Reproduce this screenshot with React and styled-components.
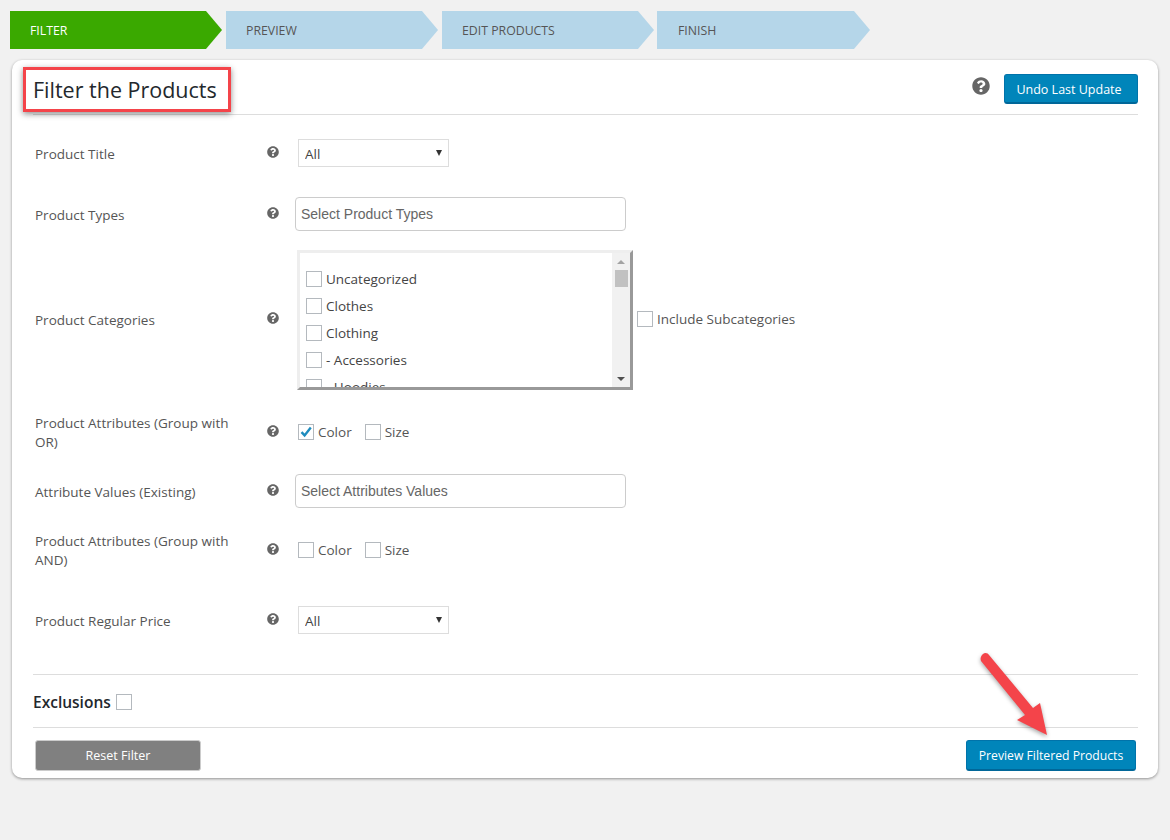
import styled, { createGlobalStyle } from "styled-components"
import { FaQuestionCircle } from "react-icons/fa"

const GlobalStyle = createGlobalStyle`
    html, body {
        margin: 0;
        padding: 0;
        background: #f1f1f1;
        font-family: "Open Sans", sans-serif;
        font-size: 13.5px;
        color: #444;
    }
`

const Page = styled.div`
    width: 1170px;
    height: 840px;
    padding-top: 11px;
    box-sizing: border-box;
`

const Steps = styled.div`
    display: flex;
    gap: 4px;
    margin-left: 10px;
    margin-bottom: 11px;
`

const Step = styled.div`
    width: 212px;
    height: 38px;
    box-sizing: border-box;
    padding-left: 20px;
    display: flex;
    align-items: center;
    font-size: 12.3px;
    text-transform: uppercase;
    background: ${(p) => (p.$active ? "#3aa900" : "#b5d6e9")};
    color: ${(p) => (p.$active ? "#fff" : "#555")};
    clip-path: polygon(0 0, calc(100% - 16px) 0, 100% 50%, calc(100% - 16px) 100%, 0 100%);

    &:last-child {
        width: 213px;
        margin-left: -1px;
        padding-left: 21px;
    }
`

const Card = styled.div`
    position: relative;
    width: 1146px;
    height: 718px;
    margin-left: 12px;
    padding: 0 20px 0 21px;
    box-sizing: border-box;
    background: #fff;
    border-radius: 10px;
    box-shadow: 0 1px 3px rgba(0, 0, 0, 0.4);
`

const Header = styled.div`
    height: 55px;
    box-sizing: border-box;
    border-bottom: 1px solid #ddd;
    display: flex;
    justify-content: space-between;
`

const Title = styled.h1`
    margin: 7px 0 0 -10px;
    width: 208px;
    height: 45px;
    box-sizing: border-box;
    border: 3px solid #f4444a;
    box-shadow: 0 2px 6px rgba(0, 0, 0, 0.45);
    padding: 0 0 0 7px;
    display: flex;
    align-items: center;
    font-size: 21.5px;
    font-weight: 400;
    color: #23282d;
    white-space: nowrap;
`

const HeaderActions = styled.div`
    display: flex;
    gap: 14px;
    padding-top: 14px;
`

const BigHelp = styled(FaQuestionCircle)`
    width: 18px;
    height: 18px;
    margin-top: 3px;
    color: #666;
`

const Button = styled.button`
    height: ${(p) => p.$height || 31}px;
    width: ${(p) => p.$width}px;
    padding: 1px ${(p) => p.$shift || 0}px 0 0;
    border: 1px solid #0073aa;
    border-bottom: 2px solid #006799;
    border-radius: 3px;
    background: #0085ba;
    color: #fff;
    font-family: "Open Sans", sans-serif;
    font-size: ${(p) => p.$font || 12.5}px;
`

const GreyButton = styled(Button)`
    padding: 0;
    background: #808080;
    border: 1px solid #ccc;
`

const Form = styled.div`
    padding-left: 2px;
`

const Row = styled.div`
    display: grid;
    grid-template-columns: 232px 31px 1fr;
    align-items: center;
    margin-top: ${(p) => p.$top}px;
    min-height: ${(p) => p.$height}px;
`

const Label = styled.div`
    width: 205px;
    line-height: 19px;
    color: #555;
    padding-top: 2px;
    margin-bottom: ${(p) => p.$lift || 0}px;
`

const Help = styled(FaQuestionCircle)`
    width: 12px;
    height: 12px;
    color: #666;
    margin-bottom: ${(p) => 3 + (p.$lift || 0)}px;
`

const SelectWrap = styled.div`
    position: relative;
    width: 151px;
    height: 28px;

    &::after {
        content: "";
        position: absolute;
        right: 7px;
        top: 11px;
        border-left: 3px solid transparent;
        border-right: 3px solid transparent;
        border-top: 6px solid #333;
    }
`

const Select = styled.select`
    appearance: none;
    width: 100%;
    height: 100%;
    box-sizing: border-box;
    padding: 2px 6px 0;
    border: 1px solid #ddd;
    border-radius: 0;
    background: #fff;
    color: #444;
    font-family: "Open Sans", sans-serif;
    font-size: 13.5px;
`

const TextInput = styled.input`
    width: 331px;
    height: 34px;
    box-sizing: border-box;
    margin-left: -3px;
    padding: 0 5px;
    border: 1px solid #ccc;
    border-radius: 4px;
    font-family: "Liberation Sans", sans-serif;
    font-size: 14px;

    &::placeholder {
        color: #666;
        opacity: 1;
    }
`

const Inline = styled.div`
    display: flex;
    align-items: center;
    gap: ${(p) => p.$gap || 0}px;
`

const Option = styled.div`
    display: flex;
    align-items: center;
    gap: 4px;
    margin-right: 13px;
    color: #555;
`

const SideOption = styled(Option)`
    margin-bottom: 2px;
`

const Box = styled.span`
    flex: none;
    width: 16px;
    height: 16px;
    box-sizing: border-box;
    display: flex;
    align-items: center;
    justify-content: center;
    border: 1px solid #b4b9be;
    background: #fff;
`

const ListboxRow = styled(Inline)`
    margin-left: -1px;
`

const Listbox = styled.div`
    width: 336px;
    height: 140px;
    box-sizing: border-box;
    display: flex;
    border-style: solid;
    border-width: 3px;
    border-color: #eee #999 #999 #eee;
`

const ListItems = styled.div`
    flex: 1;
    overflow: hidden;
    padding: 13px 0 0 6px;
`

const ListItem = styled.div`
    height: 26.8px;
    display: flex;
    align-items: center;
    gap: 4px;
    color: #444;
`

const Scrollbar = styled.div`
    position: relative;
    width: 18px;
    background: #f1f1f1;
    flex: none;
`

const ScrollThumb = styled.div`
    position: absolute;
    top: 17px;
    left: 3px;
    width: 13px;
    height: 17px;
    background: #c1c1c1;
`

const ScrollArrow = styled.div`
    position: absolute;
    left: 5px;
    border-left: 4px solid transparent;
    border-right: 4px solid transparent;
    ${(p) =>
        p.$down
            ? "bottom: 6px; border-top: 4px solid #505050;"
            : "top: 7px; border-bottom: 4px solid #a3a3a3;"}
`

const Divider = styled.div`
    height: 1px;
    background: #ddd;
    margin-top: ${(p) => p.$top || 0}px;
`

const Exclusions = styled.div`
    height: 52px;
    display: flex;
    align-items: center;
    gap: 5px;
    padding-top: 1px;
    box-sizing: border-box;
    font-size: 15.5px;
    font-weight: 600;
    color: #23282d;
`

const Footer = styled.div`
    display: flex;
    justify-content: space-between;
    margin-top: 12px;
    padding: 0 2px;
`

const Arrow = styled.svg`
    position: absolute;
    left: 958px;
    top: 585px;
    width: 90px;
    height: 100px;
    overflow: visible;
    filter: drop-shadow(0 2px 2px rgba(0, 0, 0, 0.35));
`

const categories = ["Uncategorized", "Clothes", "Clothing", "- Accessories", "- Hoodies"]

const Check = ({ checked }) => (
    <Box>
        {checked && (
            <svg width="14" height="14" viewBox="0 0 14 14">
                <path d="M2.5 7.2 L5.6 10.4 L11.8 2.6" fill="none" stroke="#1e8cbe" strokeWidth="2.4" />
            </svg>
        )}
    </Box>
)

const Attributes = ({ color }) => (
    <Inline>
        <Option><Check checked={color} />Color</Option>
        <Option><Check />Size</Option>
    </Inline>
)

const FilterRow = ({ label, top, height, lift, children }) => (
    <Row $top={top} $height={height}>
        <Label $lift={lift}>{label}</Label>
        <Help $lift={lift} />
        {children}
    </Row>
)

export default function App() {
    return (
        <Page>
            <GlobalStyle />
            <Steps>
                <Step $active>Filter</Step>
                <Step>Preview</Step>
                <Step>Edit Products</Step>
                <Step>Finish</Step>
            </Steps>
            <Card>
                <Header>
                    <Title>Filter the Products</Title>
                    <HeaderActions>
                        <BigHelp />
                        <Button $width={134} $height={30} $shift={4}>Undo Last Update</Button>
                    </HeaderActions>
                </Header>
                <Form>
                    <FilterRow label="Product Title" top={24} height={28}>
                        <SelectWrap>
                            <Select defaultValue="All"><option>All</option></Select>
                        </SelectWrap>
                    </FilterRow>
                    <FilterRow label="Product Types" top={30} height={34}>
                        <TextInput placeholder="Select Product Types" />
                    </FilterRow>
                    <FilterRow label="Product Categories" top={19} height={140} lift={2}>
                        <ListboxRow $gap={4}>
                            <Listbox>
                                <ListItems>
                                    {categories.map((c) => (
                                        <ListItem key={c}><Check />{c}</ListItem>
                                    ))}
                                </ListItems>
                                <Scrollbar>
                                    <ScrollArrow />
                                    <ScrollThumb />
                                    <ScrollArrow $down />
                                </Scrollbar>
                            </Listbox>
                            <SideOption><Check />Include Subcategories</SideOption>
                        </ListboxRow>
                    </FilterRow>
                    <FilterRow label="Product Attributes (Group with OR)" top={22} height={38}>
                        <Attributes color />
                    </FilterRow>
                    <FilterRow label="Attribute Values (Existing)" top={22} height={34}>
                        <TextInput placeholder="Select Attributes Values" />
                    </FilterRow>
                    <FilterRow label="Product Attributes (Group with AND)" top={22} height={38}>
                        <Attributes />
                    </FilterRow>
                    <FilterRow label="Product Regular Price" top={36} height={28}>
                        <SelectWrap>
                            <Select defaultValue="All"><option>All</option></Select>
                        </SelectWrap>
                    </FilterRow>
                </Form>
                <Divider $top={40} />
                <Exclusions>Exclusions <Check /></Exclusions>
                <Divider />
                <Footer>
                    <GreyButton $width={166}>Reset Filter</GreyButton>
                    <Button $width={170} $font={12.2}>Preview Filtered Products</Button>
                </Footer>
                <Arrow viewBox="0 0 90 100">
                    <path
                        d="M13 9 C15 7 18 8 19 10 L63 63 L70 58 L77 90 L47 75 L55 70 L11 16 C10 13 11 11 13 9 Z"
                        fill="#f4444a"
                    />
                </Arrow>
            </Card>
        </Page>
    )
}
